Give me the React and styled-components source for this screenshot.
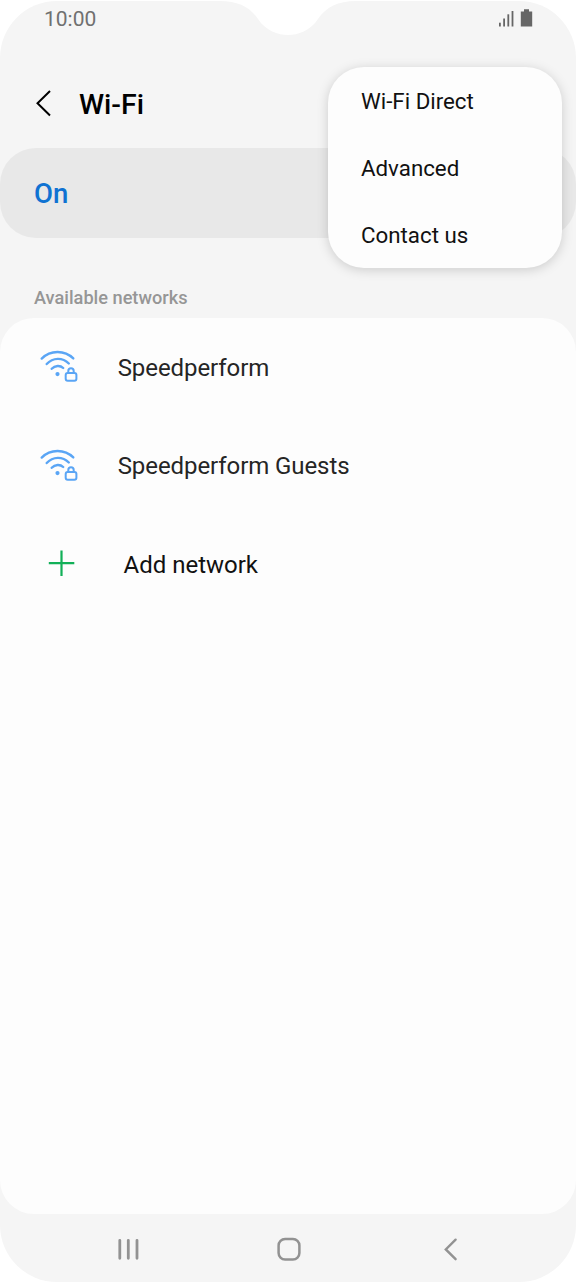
import styled, { createGlobalStyle } from 'styled-components'

const GlobalStyle = createGlobalStyle`
  body {
    margin: 0;
    background: #fff;
    font-family: Roboto, "Liberation Sans", sans-serif;
  }
`

const Phone = styled.div`
  position: relative;
  box-sizing: border-box;
  display: flex;
  flex-direction: column;
  width: 576px;
  height: 1282px;
  padding-top: 1px;
  overflow: hidden;
`

const Screen = styled.div`
  display: flex;
  flex-direction: column;
  height: 1280.5px;
  background: #f5f5f5;
  border-radius: 57px;
  overflow: hidden;
`

const Notch = styled.svg`
  position: absolute;
  top: 0;
  left: 220px;
`

const StatusBar = styled.div`
  box-sizing: border-box;
  display: flex;
  justify-content: space-between;
  align-items: center;
  flex: none;
  height: 36px;
  padding: 0 43px 0 44px;
`

const Time = styled.span`
  font-size: 21px;
  line-height: 24px;
  color: #707070;
`

const StatusIcons = styled.svg`
  display: block;
`

const Header = styled.header`
  box-sizing: border-box;
  display: flex;
  align-items: center;
  flex: none;
  height: 111px;
  padding: 22px 0 0 35px;
`

const BackIcon = styled.svg`
  display: block;
  margin-bottom: 2px;
`

const Title = styled.h1`
  margin: 2px 0 0 28px;
  font-weight: 500;
  font-size: 28.5px;
  line-height: 36px;
  color: #000;
`

const SwitchBar = styled.div`
  box-sizing: border-box;
  display: flex;
  align-items: center;
  flex: none;
  height: 90px;
  padding: 1px 0 0 34px;
  border-radius: 36px;
  background: #e8e8e8;
  font-weight: 500;
  font-size: 27.5px;
  color: #0f72d2;
`

const SectionLabel = styled.h2`
  margin: 0;
  padding: 48px 0 9px 34px;
  flex: none;
  font-weight: 500;
  font-size: 18.2px;
  line-height: 23px;
  color: #969696;
`

const NetworkList = styled.div`
  flex: none;
  height: 896px;
  border-radius: 34px;
  background: #fdfdfd;
`

const NetworkRow = styled.div`
  display: flex;
  align-items: center;
  height: 98.5px;
  padding-left: 38px;
  font-size: 24px;
  letter-spacing: ${({ $spacing }) => $spacing || '-0.08px'};
  color: ${({ $color }) => $color || '#252525'};
`

const RowText = styled.span`
  padding-top: 1px;
`

const RowIcon = styled.svg`
  flex: none;
  margin-right: ${({ $gap }) => $gap};
`

const NavBar = styled.nav`
  display: flex;
  flex: 1;
`

const NavIcon = styled.svg`
  display: block;
`

const Menu = styled.div`
  position: absolute;
  top: 67px;
  left: 327.5px;
  box-sizing: border-box;
  width: 234.5px;
  height: 201px;
  padding-left: 33.5px;
  border-radius: 36px;
  background: #fdfdfd;
  box-shadow: 0 2px 12px rgba(0, 0, 0, 0.17);
`

const MenuItem = styled.div`
  display: flex;
  align-items: center;
  height: 67.3px;
  font-size: 22.3px;
  color: #111;
`

const SecuredWifi = () => (
  <RowIcon $gap="39.7px" width="40" height="40" viewBox="0 0 40 40" fill="none" stroke="#5aa5f5" strokeWidth="2.4" strokeLinecap="round">
    <path d="M3.7 11.6C12.5 2.8 26.5 2.8 35.3 11.4" />
    <path d="M8.7 17C15 10.2 24.5 10.2 30.8 16.5" />
    <path d="M13.7 21.8C17 18.2 22.3 18.2 25.2 21" />
    <circle cx="19.5" cy="27.1" r="2.1" fill="#5aa5f5" stroke="none" />
    <rect x="27.7" y="26" width="10.7" height="7.7" rx="2" strokeWidth="2" />
    <path d="M30.3 26V24A2.7 2.7 0 0 1 35.7 24V26" strokeWidth="2" />
  </RowIcon>
)

const networks = ['Speedperform', 'Speedperform Guests']
const menuItems = ['Wi-Fi Direct', 'Advanced', 'Contact us']

const App = () => (
  <>
    <GlobalStyle />
    <Phone>
      <Screen>
        <StatusBar>
          <Time>10:00</Time>
          <StatusIcons width="35" height="20" viewBox="0 0 35 20" fill="#666">
            <rect x="1" y="13.7" width="1.8" height="3.8" />
            <rect x="5.2" y="9.5" width="1.8" height="8" />
            <rect x="9.4" y="5.3" width="1.8" height="12.2" />
            <rect x="13.6" y="2" width="1.8" height="15.5" />
            <path d="M22.8 2.5H26V0.3H31V2.5H34.2V17.5H22.8Z" />
          </StatusIcons>
        </StatusBar>
        <Header>
          <BackIcon width="16" height="28" viewBox="0 0 16 28" fill="none" stroke="#000" strokeWidth="2">
            <path d="M15 2L2.5 14.2L15 26.5" />
          </BackIcon>
          <Title>Wi-Fi</Title>
        </Header>
        <SwitchBar>On</SwitchBar>
        <SectionLabel>Available networks</SectionLabel>
        <NetworkList>
          {networks.map(name => (
            <NetworkRow key={name}>
              <SecuredWifi />
              <RowText>{name}</RowText>
            </NetworkRow>
          ))}
          <NetworkRow $color="#111" $spacing="0">
            <RowIcon $gap="45.5px" width="40" height="40" viewBox="0 0 40 40" fill="none" stroke="#12b058" strokeWidth="2.2">
              <path d="M10.8 19.2H36.3M23.5 6.5V31.9" />
            </RowIcon>
            <RowText>Add network</RowText>
          </NetworkRow>
        </NetworkList>
        <NavBar>
          <NavIcon width="576" height="67" viewBox="0 0 576 67" fill="none" stroke="#929292" strokeLinecap="round">
            <path d="M119.8 26.3V44.3M128.3 26.3V44.3M137 26.3V44.3" strokeWidth="2.8" />
            <rect x="278.6" y="24.9" width="20.8" height="20.6" rx="6.5" strokeWidth="2.5" />
            <path d="M455.6 25.7L445.8 35.4L455.6 45.2" strokeWidth="2.4" />
          </NavIcon>
        </NavBar>
      </Screen>
      <Notch width="136" height="36" viewBox="0 0 136 36">
        <path d="M0 0V1C18 1 30 7 38 19C46 31 58 35 68 35C78 35 90 31 98 19C106 7 118 1 136 1V0Z" fill="#fff" />
      </Notch>
      <Menu>
        {menuItems.map(item => (
          <MenuItem key={item}>{item}</MenuItem>
        ))}
      </Menu>
    </Phone>
  </>
)

export default App
